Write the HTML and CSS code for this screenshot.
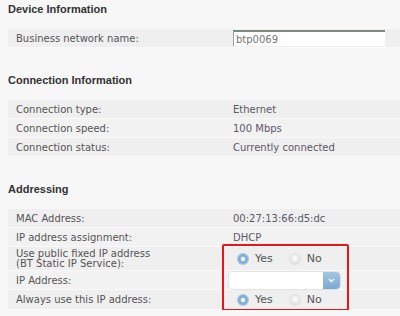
FILE: index.html
```html
<!DOCTYPE html>
<html lang="en">

<head>
    <meta charset="UTF-8">
    <title>Connection Settings</title>
    <link rel="stylesheet" href="styles.css">
</head>

<body>

    <section class="group first">
        <h3>Device Information</h3>
        <div class="rows">
            <div class="row">
                <span class="label">Business network name:</span>
                <span class="value"><input class="text-input" type="text" value="btp0069"></span>
            </div>
        </div>
    </section>

    <section class="group">
        <h3>Connection Information</h3>
        <div class="rows">
            <div class="row">
                <span class="label">Connection type:</span>
                <span class="value">Ethernet</span>
            </div>
            <div class="row alt">
                <span class="label">Connection speed:</span>
                <span class="value">100 Mbps</span>
            </div>
            <div class="row">
                <span class="label">Connection status:</span>
                <span class="value">Currently connected</span>
            </div>
        </div>
    </section>

    <section class="group">
        <h3>Addressing</h3>
        <div class="rows addressing">
            <div class="row">
                <span class="label">MAC Address:</span>
                <span class="value">00:27:13:66:d5:dc</span>
            </div>
            <div class="row alt">
                <span class="label">IP address assignment:</span>
                <span class="value">DHCP</span>
            </div>
            <div class="row tall">
                <span class="label">Use public fixed IP address<br>(BT Static IP Service):</span>
                <span class="value radios">
                    <span class="radio on"></span><span class="opt">Yes</span>
                    <span class="radio"></span><span class="opt">No</span>
                </span>
            </div>
            <div class="row alt">
                <span class="label">IP Address:</span>
                <span class="value">
                    <span class="select"><span class="select-btn">
                        <svg width="7" height="5" viewBox="0 0 7 5"><path d="M1 1 L3.5 3.5 L6 1" fill="none" stroke="#fff" stroke-width="1.4"/></svg>
                    </span></span>
                </span>
            </div>
            <div class="row last">
                <span class="label">Always use this IP address:</span>
                <span class="value radios">
                    <span class="radio on"></span><span class="opt">Yes</span>
                    <span class="radio"></span><span class="opt">No</span>
                </span>
            </div>
            <!-- highlight box drawn over the editable fields -->
            <div class="highlight"></div>
        </div>
    </section>

</body>

</html>
```

FILE: styles.css
```css
body {
    font-family: 'DejaVu Sans', Verdana, sans-serif;
    font-size: 10px;
    color: #555;
    background-color: #f7f7f7;
    margin: 0;
    padding: 0 0 0 8px;
    overflow: hidden;
}

h3 {
    font-family: 'Liberation Sans', Arial, sans-serif;
    font-size: 11px;
    font-weight: bold;
    color: #333;
    margin: 0;
    line-height: 16px;
    padding-top: 1px;
    padding-bottom: 12px;
}

.group {
    padding-top: 23px;
}

.group.first {
    padding-top: 0;
}

.rows {
    position: relative;
}

.row {
    display: flex;
    align-items: center;
    height: 18px;
    background-color: #efefef;
    border-bottom: 1px solid #f9f9f9;
}

.row.alt {
    background-color: #f2f2f2;
}

.row.tall {
    height: 23px;
    line-height: 10px;
}

.row.last {
    height: 19px;
}

.label {
    width: 217px;
    padding-left: 8px;
    flex-shrink: 0;
}

.value {
    color: #5c5866;
}

.text-input {
    width: 149px;
    height: 14px;
    margin: 0;
    padding: 0 0 0 2px;
    border: none;
    border-top: 2px solid #7d8a80;
    border-left: 1px solid #9aa09c;
    background: #fff;
    font-family: 'DejaVu Sans', Verdana, sans-serif;
    font-size: 10px;
    color: #777;
    outline: none;
}

.radios {
    display: flex;
    align-items: center;
    padding-left: 5px;
}

.radio {
    width: 10px;
    height: 10px;
    border-radius: 50%;
    background: radial-gradient(circle at 50% 40%, #fdfdfd 0, #e6e6e6 60%, #cfcfcf 100%);
    box-shadow: 0 0 0 1px #dedede;
}

.radio.on {
    background: radial-gradient(circle, #fff 0, #fff 1.5px, #8cb8dd 2.5px, #5d97c9 100%);
    box-shadow: 0 0 0 1px #a9c6df;
}

.opt {
    color: #555;
    font-size: 11px;
    margin-left: 7px;
    margin-right: 17px;
}

.select {
    display: flex;
    justify-content: flex-end;
    width: 111px;
    height: 17px;
    margin-left: -4px;
    background: #fff;
    border-radius: 4px;
    box-shadow: 0 0 0 1px #e2e2e2;
}

.select-btn {
    display: flex;
    align-items: center;
    justify-content: center;
    width: 17px;
    height: 17px;
    border-radius: 0 4px 4px 0;
    background: linear-gradient(#a5c6e3, #7aa9d3);
}

.highlight {
    position: absolute;
    left: 214px;
    top: 35px;
    width: 123px;
    height: 63px;
    border: 2px solid #e8161b;
    border-radius: 2px;
}
```
